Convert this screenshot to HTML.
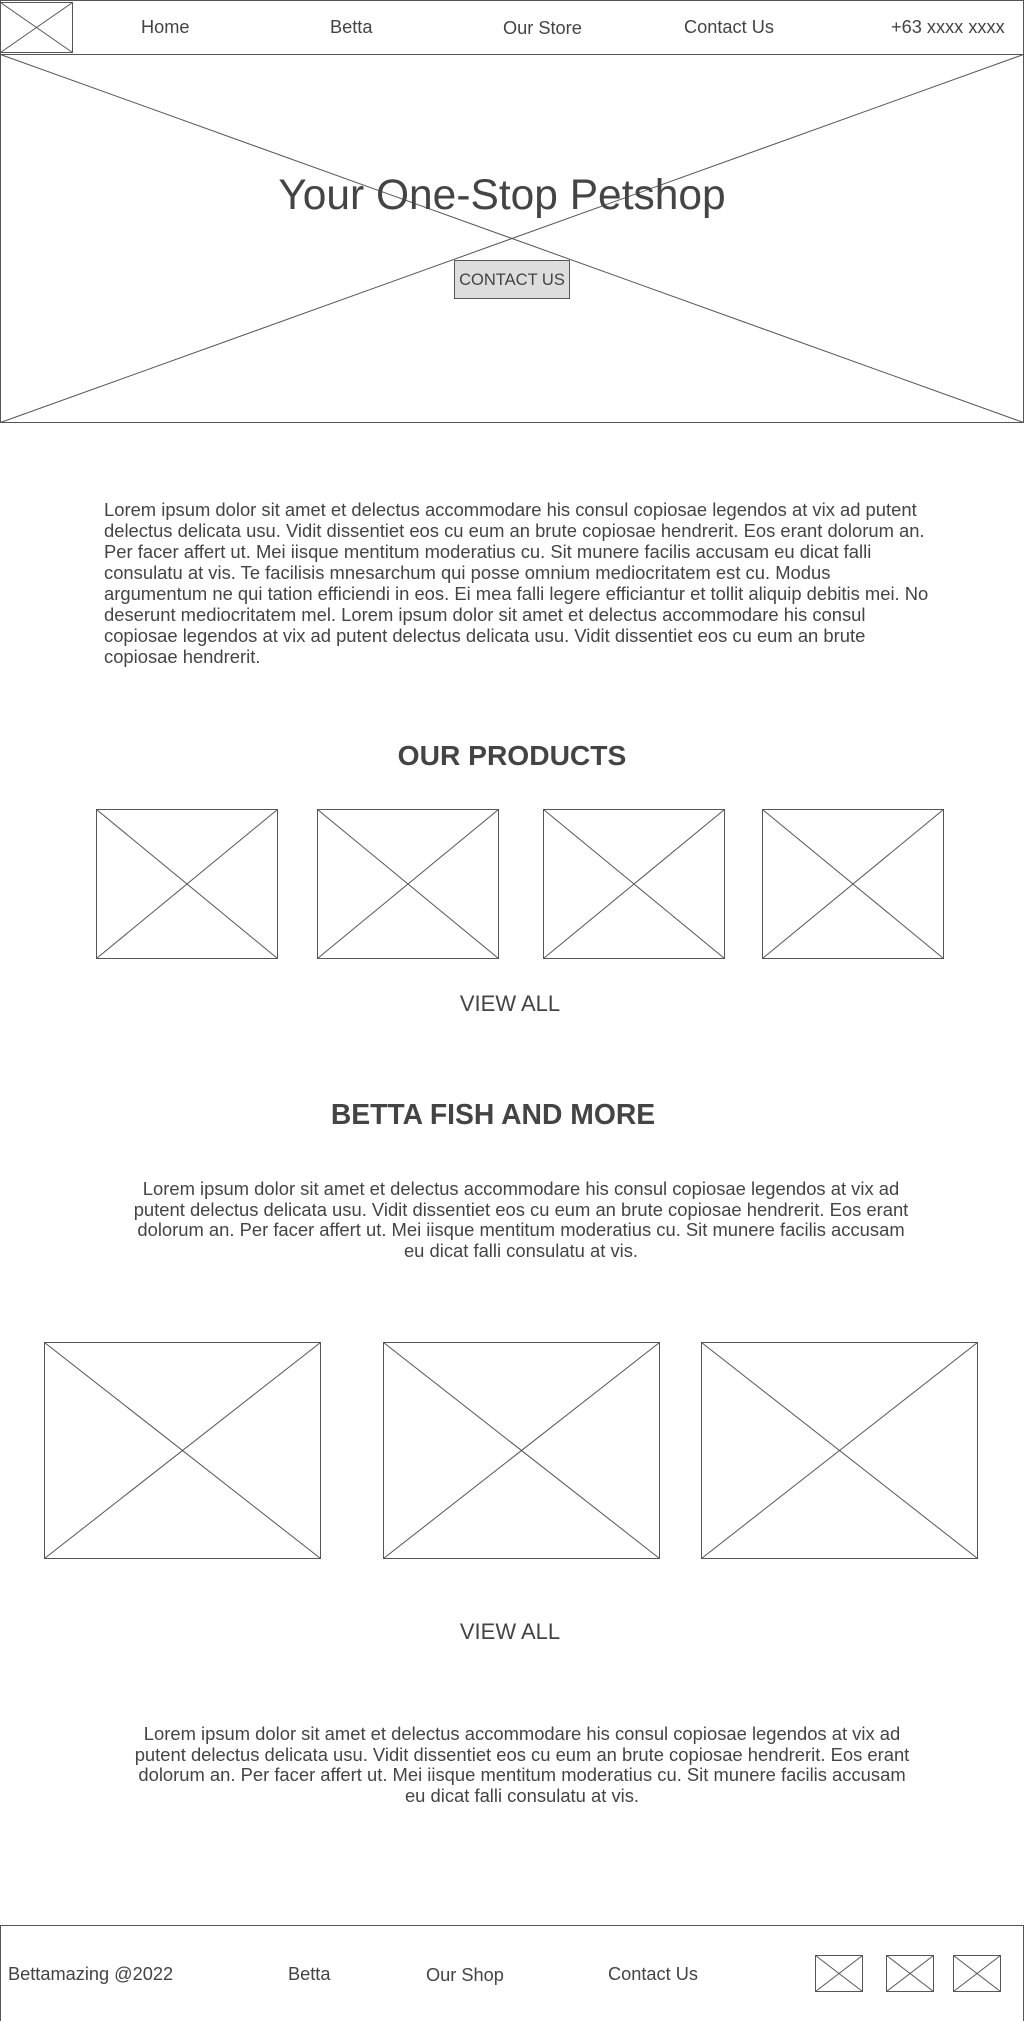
<!DOCTYPE html>
<html><head><meta charset="utf-8"><style>
*{margin:0;padding:0;box-sizing:border-box}
body{width:1024px;height:2021px;position:relative;background:#fff;font-family:"Liberation Sans",Arial,sans-serif;color:#444;overflow:hidden}
.a{position:absolute;white-space:nowrap}
.n{font-size:18.2px;line-height:18px}
.c{left:0;width:1024px;text-align:center}
svg.x{position:absolute;overflow:visible}
.p{font-size:18.4px;line-height:21px}
.q{font-size:18.4px;line-height:20.7px}
</style></head><body>
<svg class="x" style="left:0;top:0" width="1024" height="2021">
<g fill="none" stroke="#555" stroke-width="1">
<rect x="0.5" y="0.5" width="1023" height="54"/>
<rect x="0.5" y="2.5" width="72" height="50"/><path d="M0.5 2.5L72.5 52.5M72.5 2.5L0.5 52.5"/>
<rect x="0.5" y="54.5" width="1023" height="368"/><path d="M0.5 54.5L1023.5 422.5M1023.5 54.5L0.5 422.5"/>
<rect x="96.5" y="809.5" width="181" height="149"/><path d="M96.5 809.5L277.5 958.5M277.5 809.5L96.5 958.5"/>
<rect x="317.5" y="809.5" width="181" height="149"/><path d="M317.5 809.5L498.5 958.5M498.5 809.5L317.5 958.5"/>
<rect x="543.5" y="809.5" width="181" height="149"/><path d="M543.5 809.5L724.5 958.5M724.5 809.5L543.5 958.5"/>
<rect x="762.5" y="809.5" width="181" height="149"/><path d="M762.5 809.5L943.5 958.5M943.5 809.5L762.5 958.5"/>
<rect x="44.5" y="1342.5" width="276" height="216"/><path d="M44.5 1342.5L320.5 1558.5M320.5 1342.5L44.5 1558.5"/>
<rect x="383.5" y="1342.5" width="276" height="216"/><path d="M383.5 1342.5L659.5 1558.5M659.5 1342.5L383.5 1558.5"/>
<rect x="701.5" y="1342.5" width="276" height="216"/><path d="M701.5 1342.5L977.5 1558.5M977.5 1342.5L701.5 1558.5"/>
<rect x="0.5" y="1925.5" width="1023" height="100"/>
<rect x="815.5" y="1955.5" width="47" height="36"/><path d="M815.5 1955.5L862.5 1991.5M862.5 1955.5L815.5 1991.5"/>
<rect x="886.5" y="1955.5" width="47" height="36"/><path d="M886.5 1955.5L933.5 1991.5M933.5 1955.5L886.5 1991.5"/>
<rect x="953.5" y="1955.5" width="47" height="36"/><path d="M953.5 1955.5L1000.5 1991.5M1000.5 1955.5L953.5 1991.5"/>
</g>
<rect x="454.5" y="260.5" width="115" height="38" fill="#ddd" stroke="#555"/>
</svg>
<div class="a n" style="left:141px;top:18px">Home</div>
<div class="a n" style="left:330px;top:18px">Betta</div>
<div class="a n" style="left:503px;top:19px">Our Store</div>
<div class="a n" style="left:684px;top:18px">Contact Us</div>
<div class="a n" style="left:891px;top:18px">+63 xxxx xxxx</div>
<div class="a c" style="top:175px;font-size:42.5px;line-height:42px;left:-10px">Your One-Stop Petshop</div>
<div class="a" style="left:454px;top:261px;width:116px;height:39px;line-height:39px;text-align:center;font-size:16.5px">CONTACT US</div>
<div class="a p" style="left:104px;top:499px">Lorem ipsum dolor sit amet et delectus accommodare his consul copiosae legendos at vix ad putent<br>delectus delicata usu. Vidit dissentiet eos cu eum an brute copiosae hendrerit. Eos erant dolorum an.<br>Per facer affert ut. Mei iisque mentitum moderatius cu. Sit munere facilis accusam eu dicat falli<br>consulatu at vis. Te facilisis mnesarchum qui posse omnium mediocritatem est cu. Modus<br>argumentum ne qui tation efficiendi in eos. Ei mea falli legere efficiantur et tollit aliquip debitis mei. No<br>deserunt mediocritatem mel. Lorem ipsum dolor sit amet et delectus accommodare his consul<br>copiosae legendos at vix ad putent delectus delicata usu. Vidit dissentiet eos cu eum an brute<br>copiosae hendrerit.</div>
<div class="a c" style="top:741px;font-size:28.2px;line-height:28px;font-weight:bold;left:0">OUR PRODUCTS</div>
<div class="a c" style="top:993px;font-size:22px;line-height:22px;left:-2px">VIEW ALL</div>
<div class="a c" style="top:1100px;font-size:28.3px;line-height:28px;font-weight:bold;left:-19px">BETTA FISH AND MORE</div>
<div class="a q c" style="top:1179px;left:9px">Lorem ipsum dolor sit amet et delectus accommodare his consul copiosae legendos at vix ad<br>putent delectus delicata usu. Vidit dissentiet eos cu eum an brute copiosae hendrerit. Eos erant<br>dolorum an. Per facer affert ut. Mei iisque mentitum moderatius cu. Sit munere facilis accusam<br>eu dicat falli consulatu at vis.</div>
<div class="a c" style="top:1621px;font-size:22px;line-height:22px;left:-2px">VIEW ALL</div>
<div class="a q c" style="top:1724px;left:10px">Lorem ipsum dolor sit amet et delectus accommodare his consul copiosae legendos at vix ad<br>putent delectus delicata usu. Vidit dissentiet eos cu eum an brute copiosae hendrerit. Eos erant<br>dolorum an. Per facer affert ut. Mei iisque mentitum moderatius cu. Sit munere facilis accusam<br>eu dicat falli consulatu at vis.</div>
<div class="a n" style="left:8px;top:1965px">Bettamazing @2022</div>
<div class="a n" style="left:288px;top:1965px">Betta</div>
<div class="a n" style="left:426px;top:1966px">Our Shop</div>
<div class="a n" style="left:608px;top:1965px">Contact Us</div>
</body></html>
